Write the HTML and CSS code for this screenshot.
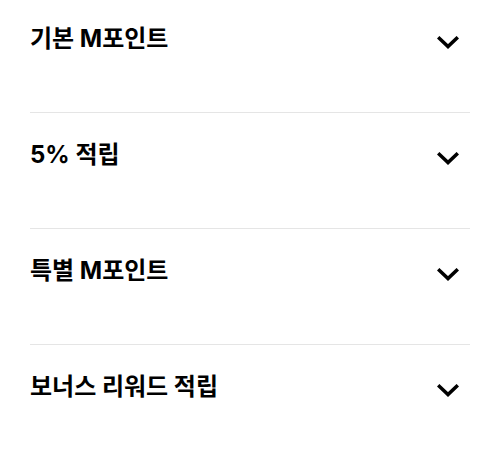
FILE: index.html
```html
<!DOCTYPE html>
<html lang="ko">
<head>
  <meta charset="UTF-8">
  <meta name="viewport" content="width=device-width, initial-scale=1">
  <title>포인트 적립 안내</title>
  <link rel="stylesheet" href="styles.css">
</head>
<body>

<div class="accordion">
  <div class="item">
    <div class="item-head">
      <span class="title">기본 M포인트</span>
      <svg class="chevron" width="22" height="14" viewBox="0 0 22 14"><path d="M2.5 2.5 L11 10.5 L19.5 2.5" /></svg>
    </div>
  </div>

  <div class="item">
    <div class="item-head">
      <span class="title">5% 적립</span>
      <svg class="chevron" width="22" height="14" viewBox="0 0 22 14"><path d="M2.5 2.5 L11 10.5 L19.5 2.5" /></svg>
    </div>
  </div>

  <div class="item">
    <div class="item-head">
      <span class="title">특별 M포인트</span>
      <svg class="chevron" width="22" height="14" viewBox="0 0 22 14"><path d="M2.5 2.5 L11 10.5 L19.5 2.5" /></svg>
    </div>
  </div>

  <div class="item">
    <div class="item-head">
      <span class="title">보너스 리워드 적립</span>
      <svg class="chevron" width="22" height="14" viewBox="0 0 22 14"><path d="M2.5 2.5 L11 10.5 L19.5 2.5" /></svg>
    </div>
  </div>
</div>

</body>
</html>
```

FILE: styles.css
```css
body {
  margin: 0;
  background: #fff;
  color: #000;
  font-family: Inter, "Noto Sans CJK KR", sans-serif;
}

.accordion {
  margin-top: -3px;
  padding: 0 30px;
}

.item {
  height: 115px;
  border-bottom: 1px solid #e5e5e5;
}

.item:last-child {
  border-bottom: none;
}

.item-head {
  display: flex;
  justify-content: space-between;
  align-items: center;
  padding: 27px 11px 0 0;
  height: 30px;
}

.title {
  font-size: 24px;
  font-weight: 700;
  line-height: 30px;
}

.chevron {
  margin-top: 7px;
}

.chevron path {
  fill: none;
  stroke: #000;
  stroke-width: 3.6;
  stroke-linecap: square;
  stroke-linejoin: miter;
}
```
